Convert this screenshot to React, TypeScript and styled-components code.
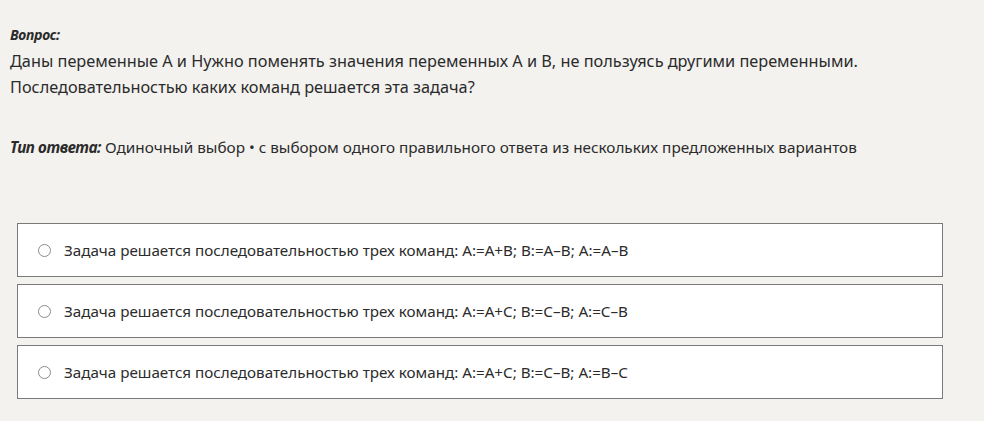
import React from "react";
import styled, { createGlobalStyle } from "styled-components";

const Global = createGlobalStyle`
  html, body { margin: 0; padding: 0; background: #f3f2ef; }
  body { font-family: "Noto Sans", "Open Sans", sans-serif; color: #2b2b2b; }
`;

const Page = styled.div`
  padding: 25px 10px 0 10px;
  width: 984px;
  height: 421px;
  box-sizing: border-box;
`;

const Label = styled.div`
  font-weight: 700;
  font-style: italic;
  font-size: 14px;
  line-height: 20px;
  letter-spacing: -0.3px;
`;

const QuestionText = styled.div`
  font-size: 16.3px;
  line-height: 26px;
  margin-top: 3px;
`;

const TypeLine = styled.div`
  margin-top: 34px;
  font-size: 15.3px;
  line-height: 26px;
`;

const TypeLabel = styled.span`
  font-weight: 700;
  font-style: italic;
  letter-spacing: -0.4px;
`;

const Options = styled.div`
  margin: 63px 0 0 7px;
  width: 926px;
  display: flex;
  flex-direction: column;
  gap: 7px;
`;

const Option = styled.label`
  display: flex;
  align-items: center;
  height: 54px;
  box-sizing: border-box;
  background: #ffffff;
  border: 1px solid #7a7a7a;
  padding-left: 20px;
  font-size: 15.2px;
  cursor: pointer;
`;

const Radio = styled.span`
  width: 11px;
  height: 11px;
  border: 1px solid #8a8a8a;
  border-radius: 50%;
  background: #fff;
  flex: none;
  margin-right: 13px;
`;

const options = [
  "Задача решается последовательностью трех команд: A:=A+B; B:=A–B; A:=A–B",
  "Задача решается последовательностью трех команд: A:=A+C; B:=C–B; A:=C–B",
  "Задача решается последовательностью трех команд: A:=A+C; B:=C–B; A:=B–C",
];

export default function App() {
  return (
    <>
      <Global />
      <Page>
        <Label>Вопрос:</Label>
        <QuestionText>
          Даны переменные А и Нужно поменять значения переменных А и В, не пользуясь другими переменными.
          <br />
          Последовательностью каких команд решается эта задача?
        </QuestionText>
        <TypeLine>
          <TypeLabel>Тип ответа:</TypeLabel> Одиночный выбор • с выбором одного правильного ответа из нескольких предложенных вариантов
        </TypeLine>
        <Options>
          {options.map((o) => (
            <Option key={o}>
              <Radio />
              {o}
            </Option>
          ))}
        </Options>
      </Page>
    </>
  );
}
